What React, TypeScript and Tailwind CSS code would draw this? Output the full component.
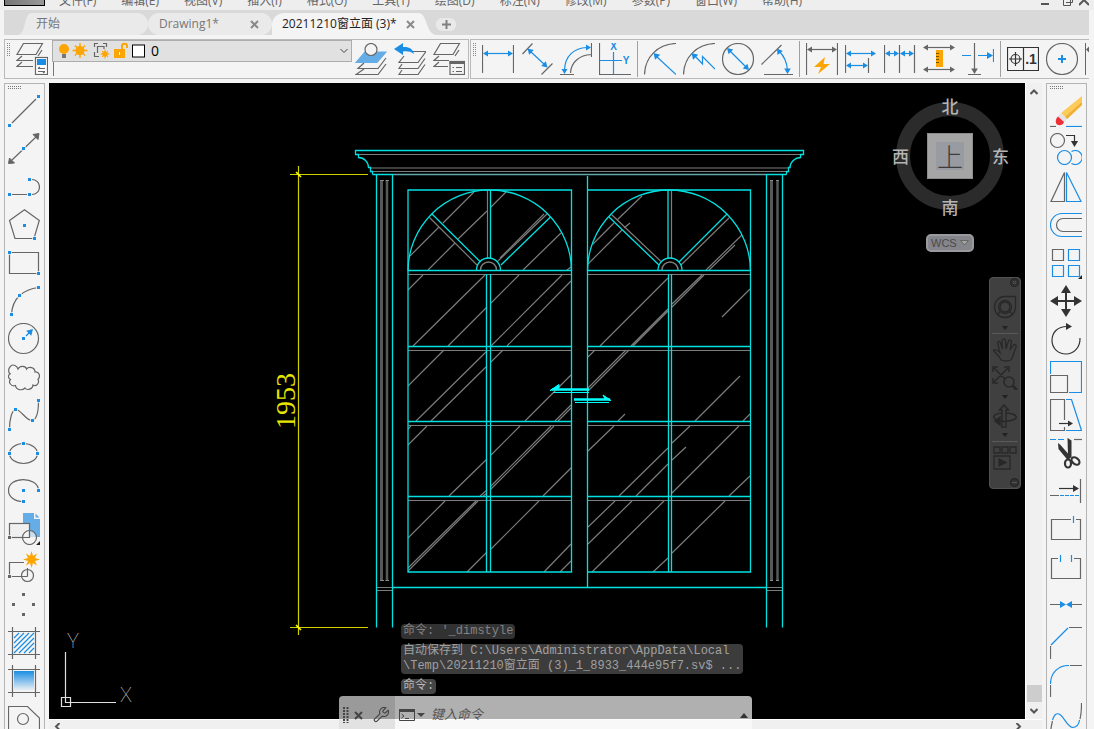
import type { ReactNode } from "react"

const GRAY = "#666666"
const BLUE = "#1a8de4"
const ORANGE = "#fca503"
const DARK = "#333333"

type Tool = { label: string; art: ReactNode }

function Art({ children }: { children: ReactNode }) {
  return (
    <svg width="32" height="32" viewBox="0 0 32 32" fill="none" stroke={GRAY} strokeWidth="1.2" className="shrink-0">
      {children}
    </svg>
  )
}

function Dot({ x, y, c = BLUE }: { x: number; y: number; c?: string }) {
  return <rect x={x - 1.5} y={y - 1.5} width="3" height="3" fill={c} stroke="#f4f4f4" strokeWidth="1.5" paintOrder="stroke" />
}

// arrowhead with its tip at x,y; a = rotation in degrees, 0 points right
function Head({ x, y, a = 0, c = BLUE, s = 1 }: { x: number; y: number; a?: number; c?: string; s?: number }) {
  return <path d="M0 0L-5 -3V3Z" fill={c} stroke="none" transform={`translate(${x} ${y}) rotate(${a}) scale(${s})`} />
}

function HArrow({ x1, x2, y, c = BLUE }: { x1: number; x2: number; y: number; c?: string }) {
  return (
    <>
      <path d={`M${x1 + 2} ${y}H${x2 - 2}`} stroke={c} />
      <Head x={x1} y={y} a={180} c={c} />
      <Head x={x2} y={y} c={c} />
    </>
  )
}

const drawTools: Tool[] = [
  { label: "直线", art: <><path d="M4 28L28 4" /><Dot x={1.5} y={30.5} /><Dot x={30.5} y={1.5} /></> },
  {
    label: "构造线",
    art: <><path d="M4 27L28 4" /><path d="M0.500 30.500L1.500 25L6.500 30ZM31 0.500L25 1.500L30 6.500Z" fill={GRAY} stroke={GRAY} strokeWidth="1" /><Dot x={15.5} y={15.5} /></>,
  },
  {
    label: "多段线",
    art: <><path d="M4 23.5H19M24 8.5A7.5 7.5 0 0 1 24 23.5" /><Dot x={1.5} y={23.5} /><Dot x={21.5} y={23.5} /><Dot x={21.5} y={8.5} /></>,
  },
  { label: "多边形", art: <><path d="M16.5 0.8L31.3 11.5L26 29.5H7L1.5 11.5Z" /><Dot x={16.5} y={16.5} /><Dot x={26.5} y={29.5} /></> },
  { label: "矩形", art: <><path d="M1.5 5.5H30.5V26.5H1.5Z" /><Dot x={1.5} y={5.5} /><Dot x={30.5} y={26.5} /></> },
  { label: "圆弧", art: <><path d="M3.5 29.5Q4 18 11.5 10.5Q19 4 30.5 2.5" /><Dot x={3.5} y={29.5} /><Dot x={11.5} y={10.5} /><Dot x={30.5} y={2.5} /></> },
  { label: "圆", art: <><circle cx="15.5" cy="15.5" r="15" /><path d="M18 13L22 9" stroke={BLUE} /><Head x={25} y={6} a={-45} s={1.2} /><Dot x={15.5} y={15.5} /></> },
  {
    label: "修订云线",
    art: <path d="M1.5 12.5C-1 8 3 2.500 7 4.500C9 5.500 9.500 6.500 10 8C12 4 18 5 18.500 8C21 5 27 6.500 27 11C31 10.500 33 15 30 18.500C32 22 28 26 25 24C25 28 19 30 17 27C14 30 8 29 7.500 24.500C3 26 0 21 2.500 18.500C-0.500 17 0 13 3 12.500" />,
  },
  {
    label: "样条曲线",
    art: <><path d="M1.5 30C1.500 20 4 10.500 8 10.500C13 10.500 18 22 24.500 21.500C29 20 30.500 12 30.500 2" /><Dot x={1.5} y={30.5} /><Dot x={7.5} y={10.5} /><Dot x={24.5} y={21.5} /><Dot x={30.5} y={1.5} /></>,
  },
  { label: "椭圆", art: <><ellipse cx="15.5" cy="16.5" rx="14" ry="10" /><Dot x={15.5} y={6.5} /><Dot x={1.5} y={16.5} /><Dot x={29.5} y={16.5} /></> },
  { label: "椭圆弧", art: <><path d="M30.500 15.500C30 1 0.500 1 0.500 15.500C0.500 22 7 26.500 15.500 26.500" /><Dot x={15.5} y={15.5} /><Dot x={30.5} y={15.5} /><Dot x={15.5} y={26.5} /></> },
  {
    label: "插入块",
    art: (
      <>
        <path d="M15 0H26V6H32V24H15Z" fill="#64ade6" stroke="none" />
        <path d="M27.5 0.500V4.500H31.500Z" fill="#64ade6" stroke="none" />
        <rect x="1.500" y="10.500" width="20" height="14" fill="#f0f0f0" />
        <circle cx="21.500" cy="24.500" r="7" fill="#f4f4f4" fillOpacity="0.7" />
        <path d="M21.500 17V24.500H14" />
        <Dot x={1.5} y={24.5} c={GRAY} />
        <path d="M32 28V32H28Z" fill="#222" stroke="none" />
      </>
    ),
  },
  {
    label: "创建块",
    art: (
      <>
        <path d="M19.500 25.500H1.500V11.500H16M19.500 17V25.500" />
        <circle cx="19.500" cy="24.500" r="6" />
        <path d="M23.500 0L25 5L29 2.500L27 7L32 8.500L27 10L29 14.500L25 12L23.500 17L22 12L18 14.500L20 10L15 8.500L20 7L18 2.500L22 5Z" fill={ORANGE} stroke="none" />
        <Dot x={1.5} y={25.5} c={GRAY} />
      </>
    ),
  },
  { label: "点", art: <><Dot x={15.5} y={5.5} c={GRAY} /><Dot x={5.5} y={15.5} c={GRAY} /><Dot x={25.5} y={15.5} c={GRAY} /><Dot x={15.5} y={25.5} c={GRAY} /></> },
  {
    label: "图案填充",
    art: (
      <>
        <path d="M4.500 0V32M27.500 0V32M0 4.500H32M0 27.500H32" />
        <path d="M6 11L11 6M6 16L16 6M6 21L21 6M6 26L26 6M11 26L26 11M16 26L26 16M21 26L26 21" stroke={BLUE} />
      </>
    ),
  },
  {
    label: "渐变色",
    art: (
      <>
        <defs>
          <linearGradient id="fade" x1="0" y1="0" x2="0" y2="1">
            <stop offset="0" stopColor="#1a8de4" />
            <stop offset="1" stopColor="#f4f4f4" />
          </linearGradient>
        </defs>
        <rect x="6" y="6" width="20" height="20" fill="url(#fade)" stroke="none" />
        <path d="M4.500 0V32M27.500 0V32M0 4.500H32M0 27.500H32" />
      </>
    ),
  },
  { label: "面域", art: <><path d="M0.500 32V3.500H19.500L31.500 15V32" /><circle cx="15" cy="16" r="5.500" /></> },
]

const modifyTools: Tool[] = [
  {
    label: "删除",
    art: (
      <>
        <path d="M0 31.500H6" />
        <path d="M16 31.500H32" stroke={BLUE} />
        <path d="M32 1V10L17 24L11 18Z" fill="#fccb5c" stroke="none" />
        <path d="M32 7V10L17 24L15 22Z" fill="#eeb035" stroke="none" />
        <path d="M11 18L17 24L14 27L8 21.500Z" fill="#e4e4e4" stroke="none" />
        <path d="M8 21.500L14 27C13 30.500 9 31 7 29.500C5 27.500 5.500 24 8 21.500Z" fill="#ee2f35" stroke="none" />
      </>
    ),
  },
  {
    label: "复制",
    art: (
      <>
        <circle cx="7.500" cy="7.500" r="7" />
        <path d="M16 2.500H24.500V9" stroke={DARK} />
        <Head x={24.5} y={14} a={90} c={DARK} s={1.2} />
        <circle cx="14.500" cy="24.500" r="7" stroke={BLUE} />
        <path d="M21.500 18.500A7 7 0 1 1 21.500 30.500" stroke={BLUE} />
      </>
    ),
  },
  { label: "镜像", art: <><path d="M14.500 1.500V30.500H1Z" /><path d="M16.500 1.500V30.500H31Z" stroke={BLUE} /></> },
  { label: "偏移", art: <><path d="M32 4.500H12A11.500 11.500 0 0 0 12 27.500H32" stroke={BLUE} /><path d="M32 9.500H13A6.500 6.500 0 0 0 13 22.500H32" /></> },
  {
    label: "阵列",
    art: (
      <>
        <path d="M2.500 2.500H13.500V13.500H2.500Z" />
        <path d="M18.500 2.500H29.500V13.500H18.500ZM2.500 18.500H13.500V29.500H2.500ZM18.500 18.500H29.500V29.500H18.500Z" stroke={BLUE} />
        <path d="M32 28V32H28Z" fill="#222" stroke="none" />
      </>
    ),
  },
  {
    label: "移动",
    art: (
      <>
        <path d="M16 4V28M4 16H28" stroke={DARK} strokeWidth="2" />
        <path d="M16 0L21 8H11ZM16 32L21 24H11ZM0 16L8 11V21ZM32 16L24 11V21Z" fill={DARK} stroke="none" />
      </>
    ),
  },
  { label: "旋转", art: <><path d="M30 15C30.500 24 24 31 16 31C8 31 2 25 2 17.500C2 9 8 3.500 17 3.500" stroke={DARK} /><Head x={22} y={3.5} c={DARK} s={1.2} /></> },
  { label: "缩放", art: <><path d="M0.500 13V0.500H31.500V31.500H19" stroke={BLUE} /><path d="M0.500 14.500H17.500V31.500H0.500Z" /></> },
  {
    label: "拉伸",
    art: (
      <>
        <path d="M14.500 21V0.500H0.500V31.500H14.500V28" />
        <path d="M16 0.500H21.500L31.500 31.500H16" stroke={BLUE} />
        <path d="M9 24.500H18" stroke={DARK} />
        <Head x={23} y={24.5} c={DARK} />
      </>
    ),
  },
  {
    label: "修剪",
    art: (
      <>
        <path d="M0 2.500H16" stroke={BLUE} strokeDasharray="6 2" />
        <path d="M24 2.500H32" />
        <path d="M8 6L10.500 8L21 20L18 23.500L8.500 12Z" fill={DARK} stroke="none" />
        <path d="M17.500 1L21.500 3.500V21L18 19.500Z" fill={DARK} stroke="none" />
        <ellipse cx="18" cy="26.500" rx="3" ry="4" stroke={DARK} strokeWidth="2.200" />
        <ellipse cx="25.500" cy="24" rx="3" ry="4.500" stroke={DARK} strokeWidth="2.200" transform="rotate(-50 25.500 24)" />
      </>
    ),
  },
  {
    label: "延伸",
    art: (
      <>
        <path d="M30.500 4V28M0 20.500H9" />
        <path d="M10 20.500H29" stroke={BLUE} strokeDasharray="4 1" />
        <path d="M9 13.500H25" stroke={DARK} />
        <Head x={29} y={13.5} c={DARK} s={1.2} />
      </>
    ),
  },
  { label: "打断于点", art: <><path d="M21 6.500H1.500V26.500H30.500V6.500H26" /><path d="M23.500 3V10" stroke={BLUE} /></> },
  { label: "打断", art: <><path d="M8 7.500H1.500V27.500H30.500V7.500H24" /><path d="M10.500 4V11M21.500 4V11" stroke={BLUE} /></> },
  { label: "合并", art: <><path d="M0 15.500H10M22 15.500H32" /><path d="M10 12L16 15.500L10 19ZM22 12L16 15.500L22 19Z" fill={BLUE} stroke="none" /></> },
  { label: "倒角", art: <><path d="M19 0.500H32M0.500 19V32" /><path d="M1 18L18 1" stroke={BLUE} /></> },
  { label: "圆角", art: <><path d="M20 0.500H32M0.500 20V32" /><path d="M0.500 19C0.500 8 8 0.500 19 0.500" stroke={BLUE} /></> },
  {
    label: "光顺曲线",
    art: <><path d="M31.500 0C31.500 8 31 12 30 16M2.500 18C1.500 22 0.500 26 0.500 32" /><path d="M2.500 17C4 12 6 10 9 11C14 13 17 24 23 24.500C27 24 29 21 29.500 17" stroke={BLUE} /></>,
  },
]

const dimGroups: Tool[][] = [
  [
    { label: "线性", art: <><path d="M0.500 2V30M31.500 2V30" /><HArrow x1={1} x2={31} y={10.5} /></> },
    {
      label: "对齐",
      art: <><path d="M11.500 0.500L1.500 11M31.500 20.500L20.500 31.500" /><path d="M9 8L24 22" stroke={BLUE} /><Head x={6.5} y={5.5} a={224} s={1.1} /><Head x={26.5} y={24.5} a={44} s={1.1} /></>,
    },
    {
      label: "弧长",
      art: (
        <>
          <path d="M31 11.500C20 12 11 19 10.500 30M31.500 0V14M0 31.500H14" />
          <path d="M27 4.500C14 5 5 13 4.500 27" stroke={BLUE} />
          <Head x={31} y={4.5} />
          <Head x={4.5} y={31} a={90} />
        </>
      ),
    },
    {
      label: "坐标",
      art: (
        <>
          <path d="M0.500 0V31.500H32" />
          <path d="M14.500 9V31M1 17.500H23" stroke={BLUE} />
          <text x="14.500" y="7" textAnchor="middle" fill={BLUE} stroke="none" className="font-['Liberation_Sans'] text-[10px] font-bold">X</text>
          <text x="27" y="21" textAnchor="middle" fill={BLUE} stroke="none" className="font-['Liberation_Sans'] text-[10px] font-bold">Y</text>
        </>
      ),
    },
  ],
  [
    { label: "半径", art: <><path d="M32 0.500C14 1 1 14 0.500 31.500" /><path d="M12 13L32 31.500" stroke={BLUE} /><Head x={9.5} y={10} a={226} s={1.2} /></> },
    { label: "折弯", art: <><path d="M32 0.500C14 1 1 14 0.500 31.500" /><path d="M11 12L19.500 21V13.500L32 26" stroke={BLUE} /><Head x={8.5} y={10} a={226} s={1.2} /></> },
    { label: "直径", art: <><circle cx="16" cy="16" r="15.500" /><path d="M8 8L24 24" stroke={BLUE} /><Head x={5} y={5} a={225} s={1.1} /><Head x={27} y={27} a={45} s={1.1} /></> },
    { label: "角度", art: <><path d="M20.500 2L0.500 21.500M3 31.500H32" /><path d="M18 8C24 14 26 20 26.500 27" stroke={BLUE} /><Head x={16} y={5.5} a={235} s={1.1} /><Head x={26.5} y={31} a={90} s={1.1} /></> },
  ],
  [
    { label: "快速标注", art: <><path d="M0.500 0V32M31.500 0V32" /><HArrow x1={1} x2={31} y={6.5} c={GRAY} /><path d="M19 14L8 24H15L12 31L24 21H17.500Z" fill={ORANGE} stroke="none" /></> },
    { label: "基线", art: <><path d="M0.500 2V30M23.500 15V30" /><HArrow x1={1} x2={31} y={10.5} /><HArrow x1={1} x2={23} y={22.5} /></> },
    { label: "连续", art: <><path d="M0.500 2V30M15.500 2V30M30.500 2V30" /><HArrow x1={1} x2={15} y={10.5} /><HArrow x1={16} x2={30} y={10.5} /></> },
    {
      label: "等距标注",
      art: <><HArrow x1={0} x2={32} y={4.5} c={GRAY} /><HArrow x1={0} x2={32} y={26.5} c={GRAY} /><rect x="13" y="7" width="7" height="17" fill={ORANGE} stroke="none" /><path d="M13 10.500H16M13 13.500H16M13 16.500H16M13 19.500H16" stroke="#7a5200" strokeWidth="1" /></>,
    },
    {
      label: "折断标注",
      art: <><path d="M12.500 0V27M6 31.500H19" /><Head x={12.5} y={31} a={90} c={GRAY} s={1.1} /><path d="M0 12.500H9M16 12.500H26M31.500 6V19" stroke={BLUE} /><Head x={31} y={12.5} s={1.2} /></>,
    },
  ],
  [
    {
      label: "公差",
      art: (
        <>
          <path d="M0.500 4.500H31.500V27.500H0.500ZM16.500 4.500V27.500" stroke={DARK} />
          <circle cx="8.500" cy="16" r="4.500" stroke={DARK} />
          <path d="M2 16H15M8.500 9V23" stroke={DARK} />
          <text x="24" y="21" textAnchor="middle" fill={DARK} stroke="none" className="font-['Liberation_Sans'] text-[14px] font-bold">.1</text>
        </>
      ),
    },
    { label: "圆心标记", art: <><circle cx="16" cy="16" r="15.500" /><path d="M12 16H20M16 12V20" stroke={BLUE} strokeWidth="2" /></> },
  ],
]

const layerTools: Tool[] = [
  {
    label: "将对象的图层置为当前",
    art: (
      <>
        <path d="M9 20L3 25.500H23L31 15M9 26L1 31.500H23L31 21" />
        <path d="M10 9H31L22 19.500H1Z" fill="#64ade6" stroke="#64ade6" />
        <circle cx="16" cy="6.500" r="6" fill="#f4f4f4" />
      </>
    ),
  },
  {
    label: "上一个图层",
    art: (
      <>
        <path d="M18 8.500H32L24 19.500H5L10 13M8 21L5 25.500H24L31 15.500M8 27L5 31.500H24L31 21.500" />
        <path d="M0 6L9 0V4C15 3.500 19 6 20 11C17 8.500 13 8 9 8.500V12Z" fill={BLUE} stroke="none" />
      </>
    ),
  },
  {
    label: "图层状态管理器",
    art: (
      <>
        <path d="M7.500 0.500H26.500L20 11.500H1ZM6 13L1 17.500H16M22 13L26 7M6 19L1 23.500H15" />
        <rect x="17" y="18.500" width="14.500" height="13" fill="#f4f4f4" />
        <path d="M16.500 19.500H32" strokeWidth="3" />
        <path d="M19.500 24.500H21M23 24.500H29M19.500 28.500H21M23 28.500H29" />
      </>
    ),
  },
]

const menus = ["文件(F)", "编辑(E)", "视图(V)", "插入(I)", "格式(O)", "工具(T)", "绘图(D)", "标注(N)", "修改(M)", "参数(P)", "窗口(W)", "帮助(H)"]

function ToolButton({ tool }: { tool: Tool }) {
  return (
    <button type="button" aria-label={tool.label} className="flex shrink-0 items-center">
      <Art>{tool.art}</Art>
    </button>
  )
}

function Grip({ vertical = false }: { vertical?: boolean }) {
  return vertical ? (
    <svg width="4" height="14" className="shrink-0" stroke="#888" strokeDasharray="1 1">
      <path d="M0.500 0V14M2.500 0V14" />
    </svg>
  ) : (
    <svg width="14" height="8" className="shrink-0" stroke="#777" strokeDasharray="1 1">
      <path d="M0 2.500H14M0 4.500H14" />
    </svg>
  )
}

function SideBar({ tools }: { tools: Tool[] }) {
  return (
    <div className="flex w-[41px] shrink-0 flex-col overflow-hidden border border-b-0 border-[#b4b4b4] bg-[#f4f4f4] pl-[3px]">
      <div className="h-2 shrink-0"><Grip /></div>
      {tools.map((tool) => (
        <div key={tool.label} className="flex h-[38px] shrink-0 items-center">
          <ToolButton tool={tool} />
        </div>
      ))}
    </div>
  )
}

function MenuBar() {
  return (
    <div className="flex h-[10px] shrink-0 items-end overflow-hidden bg-[#eeeeee] text-xs leading-4 text-[#666]">
      <div className="mb-1 ml-1 h-4 w-[41px] shrink-0 border border-black bg-gradient-to-r from-[#777] to-[#999]" />
      <nav className="mb-px ml-[14px] flex flex-1 gap-[25px]">
        {menus.map((m) => (
          <button key={m} type="button" className="whitespace-nowrap">{m}</button>
        ))}
      </nav>
      <div className="mb-[2px] flex shrink-0 items-end gap-[6px] pr-[5px] text-[#555]">
        <button type="button" aria-label="最小化" className="mr-[7px]"><svg width="9" height="8" stroke="currentColor" strokeWidth="2"><path d="M0 4H8" /></svg></button>
        <button type="button" aria-label="还原"><svg width="10" height="8" fill="none" stroke="currentColor"><path d="M0.500 0V5.500H7.500V0M3 2.500H9.500V0" /></svg></button>
        <button type="button" aria-label="关闭"><svg width="10" height="8" stroke="currentColor" strokeWidth="2"><path d="M0 5L9 -4M1 -4L10 5" /></svg></button>
      </div>
    </div>
  )
}

function CloseMark() {
  return (
    <svg width="9" height="9" stroke="#8a8a8a" strokeWidth="2"><path d="M1 1L8 8M8 1L1 8" /></svg>
  )
}

function FileTabs() {
  return (
    <div className="ml-1 mr-[5px] flex h-[25px] shrink-0 items-end bg-[#d9d9d9] pl-[14px] text-xs text-[#777]">
      <svg width="14" height="22" fill="#eaeaea" className="shrink-0"><path d="M0 22C9 20 5 0 14 0V22Z" /></svg>
      <button type="button" className="h-[22px] w-[116px] rounded-r-xl bg-[#eaeaea] pl-1 text-left">开始</button>
      <div className="flex h-[22px] w-[124px] items-center justify-between rounded-xl bg-[#eaeaea] pl-[11px] pr-[13px]">
        <button type="button">Drawing1*</button>
        <button type="button" aria-label="关闭 Drawing1"><CloseMark /></button>
      </div>
      <div className="flex h-[22px] w-[146px] items-center justify-between rounded-tl-xl bg-[#f4f4f4] pl-[10px] pr-[3px] text-[#222]">
        <button type="button" className="whitespace-nowrap">20211210窗立面 (3)*</button>
        <button type="button" aria-label="关闭当前图形"><CloseMark /></button>
      </div>
      <svg width="18" height="22" fill="#f4f4f4" className="shrink-0"><path d="M0 0C10 0 7 20 18 22H0Z" /></svg>
      <button type="button" aria-label="新图形" className="mb-1 flex h-[13px] w-5 items-center justify-center rounded-md bg-[#e9e9e9]">
        <svg width="9" height="9" stroke="#808080" strokeWidth="2"><path d="M0 4.500H9M4.500 0V9" /></svg>
      </button>
    </div>
  )
}

function LayerPanel() {
  return (
    <div className="flex w-[465px] shrink-0 border border-[#b9b9b9] pl-[2px]">
      <div className="pt-[3px]"><Grip vertical /></div>
      <div className="ml-[5px] flex items-center">
        <ToolButton
          tool={{
            label: "图层特性",
            art: (
              <>
                <path d="M7.500 0.500H26.500L20 11.500H1ZM6 13L1 17.500H17M22 13L26 7M6 19L1 23.500H17" />
                <rect x="19.500" y="14.500" width="12" height="17" fill="#fff" />
                <rect x="21" y="16" width="9" height="6" fill={BLUE} stroke="none" />
                <path d="M22 25.500H29M22 28.500H29M24 24L22 25.500M27 30L29 28.500" />
              </>
            ),
          }}
        />
      </div>
      <div className="ml-1 w-[300px] shrink-0">
        <div className="relative flex h-[22px] items-center border border-[#adadad] bg-[#e1e1e1] pl-[6px]">
          <svg width="92" height="18" viewBox="0 0 92 18" fill="none" className="shrink-0">
            <circle cx="5" cy="7" r="5" fill={ORANGE} />
            <path d="M3 12H7V16H3Z" fill="#777" />
            <circle cx="21" cy="8.500" r="4.500" fill={ORANGE} />
            <path d="M21 1V16M13.500 8.500H28.500M16 3.500L26 13.500M26 3.500L16 13.500" stroke={ORANGE} strokeWidth="1.500" />
            <path d="M35.500 5V1.500H39M44 1.500H47.500V5M35.500 10V14.500H40M38.500 11V4.500H45V7" stroke={GRAY} strokeWidth="1.200" />
            <circle cx="46" cy="12" r="2.800" fill={ORANGE} />
            <path d="M46 7.500V16.500M41.500 12H50.500M43 9L49 15M49 9L43 15" stroke={ORANGE} />
            <rect x="55" y="7" width="11" height="9" fill={ORANGE} />
            <path d="M63 7V4C63 1 68 1 68 4V6" stroke={ORANGE} strokeWidth="2" />
            <path d="M60.500 10V13" stroke="#fff" />
            <rect x="73.500" y="3" width="12" height="12" fill="#fff" stroke="#000" />
          </svg>
          <select aria-label="图层" className="h-5 flex-1 appearance-none bg-transparent text-sm text-black">
            <option>0</option>
          </select>
          <svg width="8" height="6" className="pointer-events-none absolute right-[3px]" fill="none" stroke="#444"><path d="M0.500 1L4 4.500L7.500 1" /></svg>
        </div>
        <div className="ml-px h-[14px] w-px bg-[#777]" />
      </div>
      <div className="ml-[3px] flex items-center gap-[7px]">
        {layerTools.map((t) => <ToolButton key={t.label} tool={t} />)}
      </div>
    </div>
  )
}

function DimPanel() {
  return (
    <div className="flex min-w-0 flex-1 overflow-hidden border border-r-0 border-[#b9b9b9] pl-[2px]">
      <div className="shrink-0 pt-[3px]"><Grip vertical /></div>
      <div className="-ml-[2px] flex items-center">
        {dimGroups.map((group, i) => (
          <div key={i} className="flex h-9 items-center gap-[7px] border-l border-[#a0a0a0] px-[6px] first:border-transparent">
            {group.map((t) => <ToolButton key={t.label} tool={t} />)}
          </div>
        ))}
        <svg width="5" height="32" className="shrink-0" stroke={GRAY} fill="none"><path d="M1.500 0V32" /><path d="M5 3.500L2 6.500L5 9.500Z" fill={GRAY} stroke="none" /></svg>
      </div>
    </div>
  )
}

// glass reflections: x1, y1, x2, y2
const glare = [
  [474, 192, 443, 223], [439, 227, 410, 256], [487, 211, 458, 239], [455, 243, 428, 270], [506, 192, 491, 207], [544, 214, 500, 258],
  [561, 233, 523, 270], [571, 267, 567, 270], [423, 275, 408, 290], [485, 275, 413, 346], [487, 307, 448, 346], [519, 275, 491, 303],
  [562, 275, 491, 346], [571, 281, 507, 346], [444, 350, 408, 386], [487, 351, 416, 421], [487, 366, 431, 421], [503, 350, 491, 362],
  [571, 375, 525, 421], [571, 405, 555, 421], [571, 408, 558, 421], [411, 426, 408, 429], [427, 426, 408, 445], [487, 459, 449, 496],
  [520, 426, 491, 455], [551, 426, 491, 486], [554, 426, 491, 489], [487, 490, 480, 496], [487, 493, 483, 496], [571, 468, 543, 496],
  [445, 501, 408, 538], [476, 501, 408, 568], [478, 501, 408, 571], [487, 552, 467, 572], [539, 501, 491, 549], [571, 544, 544, 572],
  [571, 561, 560, 572],
  [642, 196, 617, 220], [614, 223, 593, 244], [630, 223, 624, 228], [622, 230, 588, 264], [742, 235, 706, 270], [735, 245, 709, 270],
  [668, 278, 600, 346], [702, 275, 672, 304], [704, 275, 672, 307], [668, 309, 631, 346], [668, 311, 633, 346], [750, 289, 722, 317],
  [595, 350, 588, 357], [626, 350, 588, 388], [629, 350, 588, 391], [740, 376, 695, 421], [625, 414, 618, 421], [750, 414, 743, 421],
  [614, 426, 588, 451], [668, 448, 619, 496], [668, 464, 636, 496], [690, 426, 672, 443], [686, 447, 672, 460], [739, 426, 672, 493],
  [750, 476, 729, 496], [615, 501, 588, 527], [632, 501, 588, 544], [664, 501, 592, 572], [668, 558, 653, 572], [725, 501, 672, 553],
]

const rails = [270.5, 346.5, 421.5, 496.5]

function Drawing() {
  return (
    <svg viewBox="49 83 976 636" fill="none" className="h-full w-full">
      <g stroke="#7c7c7c" strokeWidth="1.200">
        <path d={glare.map(([a, b, c, d]) => `M${a} ${b}L${c} ${d}`).join("")} />
        <path d="M358 154.500H800M370 168H789M372 171.500H787" strokeWidth="1" />
        <path d="M477 265L429.500 217.500M497 262L547 214M661.500 262L611.500 214.500M681 265L729 218M487.500 190V259M671.500 190V259" />
        <path d="M480.500 270A8 8 0 0 1 496.500 270M662 270A8 8 0 0 1 678 270" strokeWidth="1.500" />
        <path d="M377 587.500H392M377 590.500H392M767 587.500H782M767 590.500H782" />
        {rails.map((y) => <path key={y} d={`M408 ${y + 4}H571M588 ${y + 4}H750`} strokeWidth="1" />)}
      </g>
      <g stroke="#585858">
        <path d="M381.500 181V581M771.500 181V581" strokeWidth="3" />
        <path d="M387 181V581M777.500 181V581" strokeWidth="2.500" />
        <path d="M380 180.500H384M385.500 180.500H389M770 180.500H773M776 180.500H779M380 580.500H384M385.500 580.500H389M770 580.500H773M776 580.500H779" stroke="#8a8a8a" />
      </g>
      <g stroke="#00e2e2" strokeWidth="1.300">
        <path d="M372.500 174.500V171.500H370.500V167.500H368.500C368.500 162 364 157.500 358.500 157.500V154.500H355.500V150.500H803.500V154.500H800.500V157.500C795 157.500 790 162 790 167.500H788.500V171.500H786.500V174.500" />
        <path d="M372.500 174.500H393M766 174.500H786.500" />
        <path d="M393 174.500H766" stroke="#5fa9ad" />
        <path d="M376.500 174.500V627.500M392.500 174.500V627.500M766.500 174.500V627.500M782.500 174.500V627.500M587.500 176V587.500M392.500 587.500H766.500" />
        <path d="M408 190H571.500V572H408ZM587.500 190H750.500V572H587.500" />
        <path d="M408 271A81.700 81 0 0 1 571.500 271M587.500 271A81.500 81 0 0 1 750.500 271" />
        <path d="M490.500 190V259M668 190V259M486.500 274V572M490.500 274V572M668.500 274V572M671.500 274V572" />
        <path d="M432 214L480.500 262M550.500 217L501 265M609 217L659 265M727 214L679 262" />
        <path d="M476.500 270A12 12 0 0 1 500.500 270M658 270A12 12 0 0 1 682 270" />
        {rails.map((y) => <path key={y} d={`M408 ${y}H571M588 ${y}H750`} />)}
      </g>
      <g stroke="#00ffff" strokeWidth="2.500">
        <path d="M552 389.500H589M574 399.500H610" />
        <path d="M553 392.500H589M575 402.500H609" strokeWidth="1" />
        <path d="M550 390.500L559 384.500V388ZM611 400.500L603 395L605 399Z" fill="#00ffff" strokeWidth="1" />
      </g>
      <g stroke="#d2d200">
        <path d="M298.500 166V635M290 174.500H368M290 627.500H368" strokeWidth="1.200" />
        <path d="M296 172L301 177M296 625L301 630" stroke="#ffff00" strokeWidth="1.500" />
      </g>
      <text x="295" y="401" textAnchor="middle" transform="rotate(-90 295 401)" fill="#e6e600" className="font-['Liberation_Serif'] text-[28px]">1953</text>
      <path d="M65.500 652V702.500H116M61.500 697.500H70.500V706.500H61.500Z" stroke="#e0e0e0" strokeWidth="1.200" />
      <text x="73" y="648" textAnchor="middle" fill="#d0d0d0" className="font-['Roboto'] text-[20px] font-thin">Y</text>
      <text x="126" y="702" textAnchor="middle" fill="#d0d0d0" className="font-['Roboto'] text-[20px] font-thin">X</text>
    </svg>
  )
}

function ViewCube() {
  return (
    <div className="absolute right-[15px] top-3 flex w-[120px] flex-col items-center text-[#b4b4b4]">
      <div className="relative flex h-[121px] w-full items-center justify-center font-['Noto_Sans_CJK_SC',sans-serif] text-[17px] font-medium leading-6">
        <svg width="108" height="108" viewBox="0 0 108 108" fill="none" stroke="#2b2b2b" strokeWidth="14"><circle cx="54" cy="54" r="47" /></svg>
        <button type="button" className="absolute flex h-[46px] w-[46px] items-center justify-center border border-[#8c8c8c] bg-[#a5a5a5]">
          <span className="h-7 w-7 bg-[#999ba2] text-center font-['Noto_Sans_CJK_SC',serif] text-[26px] font-light leading-7 text-[#3c3c3c]">上</span>
        </button>
        <span className="absolute top-[-1px]">北</span>
        <span className="absolute bottom-[-3px]">南</span>
        <span className="absolute left-[2px]">西</span>
        <span className="absolute right-px">东</span>
      </div>
      <button type="button" className="mt-[18px] flex h-[18px] w-12 items-center justify-between rounded-[5px] border-2 border-[#9a9a9e] bg-[#85858c] px-[3px] font-['Liberation_Sans'] text-[11px] text-[#4a4a4a]">
        WCS
        <svg width="9" height="6" fill="#a5a5a5" stroke="#666"><path d="M0.500 0.500H8.500L4.500 5Z" /></svg>
      </button>
    </div>
  )
}

function Caret() {
  return <svg width="6" height="4" fill="#222"><path d="M0 0H6L3 4Z" /></svg>
}

function NavBar() {
  return (
    <div className="absolute right-1 top-[194px] flex h-[212px] w-8 flex-col items-center rounded border border-[#525252] bg-[#404040] text-[#282828]">
      <svg width="9" height="9" className="mr-px self-end" fill="#333" stroke="#202020"><circle cx="4.500" cy="4.500" r="4" /><path d="M3 3L6 6M6 3L3 6" stroke="#555" /></svg>
      <button type="button" aria-label="导航控制盘" className="mt-2">
        <svg width="24" height="24" fill="none" stroke="currentColor" strokeWidth="1.300"><path d="M12 1.500H22.500V12A10.500 10.500 0 1 1 12 1.500Z" /><circle cx="12" cy="12" r="6.500" /><circle cx="12" cy="12" r="5" /><path d="M7 17L4 20M17 17L20 20" /></svg>
      </button>
      <div className="mt-[7px]"><Caret /></div>
      <div className="mt-[3px] h-px w-[26px] bg-[#5a5a5a]" />
      <button type="button" aria-label="平移" className="mt-1">
        <svg width="26" height="24" fill="none" stroke="currentColor" strokeWidth="1.300"><path d="M9 22C7 17 3 15 1.500 12.500C3 10.500 6 12.500 8 14.500L5.500 5C6 2.500 8 3 8.500 5L10.500 11L10 2.500C11 0 13 0.500 13.500 2.500L14 11L16.500 3C18 1 19.500 2 19.500 4L18 12L21.500 7C23 5.500 24.500 7 24 9C22 14 21 19 19 22Q14 24 9 22Z" /></svg>
      </button>
      <button type="button" aria-label="范围缩放" className="mt-1">
        <svg width="26" height="24" fill="none" stroke="currentColor" strokeWidth="1.500"><path d="M2 2L16 16M16 2L2 16M1 6V1H6M12 1H17V6M1 12V17H6" /><circle cx="17" cy="16" r="5" fill="#404040" /><path d="M21 20L25 24" strokeWidth="3" /></svg>
      </button>
      <div className="mt-[5px]"><Caret /></div>
      <button type="button" aria-label="动态观察" className="mt-[5px]">
        <svg width="26" height="24" fill="none" stroke="currentColor" strokeWidth="1.500"><path d="M10 23V6H7.500L12 1L16.500 6H14V23ZM10 9C3 9.500 1 12 2 14C3 15 4 16 6 16M14 9C22 9 25 12 24 14C22 17 12 18 7 17" /><path d="M3 17L8 13V21Z" fill="currentColor" /></svg>
      </button>
      <div className="mt-[5px]"><Caret /></div>
      <div className="mt-1 h-px w-[26px] bg-[#5a5a5a]" />
      <button type="button" aria-label="ShowMotion" className="mt-1">
        <svg width="25" height="24" fill="none" stroke="currentColor" strokeWidth="1.300"><path d="M1 1H7V7H1ZM9 1H15V7H9ZM17 1H23V7H17ZM1 10H17V23H1Z" /><path d="M6 13L13 16.500L6 20Z" fill="currentColor" /></svg>
      </button>
      <svg width="9" height="9" className="mb-px mr-px mt-auto self-end" fill="#333" stroke="#202020"><circle cx="4.500" cy="4.500" r="4" /><path d="M2 4.500H7" stroke="#555" /></svg>
    </div>
  )
}

function CommandLine() {
  return (
    <div className="absolute bottom-0 left-[290px] w-[413px]">
      <div className="ml-[62px] flex flex-col items-start gap-[5px] whitespace-pre font-['Liberation_Mono','Noto_Sans_CJK_SC',monospace] text-xs leading-[15px] text-[#a0a0a0]">
        <p className="rounded-sm bg-[#323232] px-[2px] text-[#828282]">命令: '_dimstyle</p>
        <p className="rounded-sm bg-[#3c3c3c] px-[2px]">
          自动保存到 C:\Users\Administrator\AppData\Local
          <br />
          \Temp\20211210窗立面 (3)_1_8933_444e95f7.sv$ ...
        </p>
        <p className="rounded-sm bg-[#464646] px-[2px] text-[#b8b8b8]">命令:</p>
      </div>
      <div className="mt-[2px] flex h-[33px] overflow-hidden rounded-t-sm text-[#444]">
        <div className="flex w-14 items-center gap-[5px] bg-[#dcdcdc]/70 pl-1 pt-[5px]">
          <svg width="6" height="16" stroke="#444" strokeWidth="2" strokeDasharray="2 1"><path d="M1 0V16M4.500 0V16" /></svg>
          <button type="button" aria-label="关闭命令行"><svg width="9" height="9" stroke="currentColor" strokeWidth="2"><path d="M1 1L8 8M8 1L1 8" /></svg></button>
          <button type="button" aria-label="自定义" className="ml-1">
            <svg width="18" height="18" viewBox="0 0 24 24" fill="none" stroke="currentColor" strokeWidth="1.500"><path d="M14.700 6.300a1 1 0 0 0 0 1.400l1.600 1.600a1 1 0 0 0 1.400 0l3.800-3.800a6 6 0 0 1-7.900 7.900l-6.900 6.900a2.100 2.100 0 0 1-3-3l6.900-6.900a6 6 0 0 1 7.900-7.900z" /></svg>
          </button>
        </div>
        <label className="flex flex-1 items-center bg-[#fbfbfb]/70 pl-1 pr-1 pt-[5px]">
          <svg width="27" height="12" fill="none" stroke="#444"><path d="M0.500 0.500H15.500V11.500H0.500Z" /><path d="M0 1.500H16" strokeWidth="3" /><path d="M2.500 5L5 7L2.500 9M6 9.500H10" /><path d="M18 4H26L22 8Z" fill="#444" stroke="none" /></svg>
          <input aria-label="命令" placeholder="键入命令" className="ml-[5px] min-w-0 flex-1 bg-transparent text-[13px] italic outline-none placeholder:text-[#555]" />
          <svg width="8" height="5" fill="#333"><path d="M0 5H8L4 0Z" /></svg>
        </label>
      </div>
    </div>
  )
}

export default function App() {
  return (
    <div className="flex h-screen flex-col overflow-hidden bg-[#f4f4f4] font-['Open_Sans','Noto_Sans_CJK_SC',sans-serif]">
      <MenuBar />
      <FileTabs />
      <div className="ml-1 mr-[5px] mt-1 flex h-10 shrink-0 gap-px">
        <LayerPanel />
        <DimPanel />
      </div>
      <div className="mt-1 flex min-h-0 flex-1 gap-1 pl-1 pr-[7px]">
        <SideBar tools={drawTools} />
        <main className="relative flex min-w-0 flex-1 flex-col">
          <div className="flex min-h-0 flex-1">
            <div className="relative min-w-0 flex-1 overflow-hidden bg-black">
              <Drawing />
              <ViewCube />
              <NavBar />
            </div>
            <div className="flex w-[17px] shrink-0 flex-col items-center border-l border-white bg-[#f0f0f0] pb-[5px] pt-[6px]">
              <button type="button" aria-label="向上滚动"><svg width="8" height="6" fill="none" stroke="#555" strokeWidth="2"><path d="M0.500 5L4 1.500L7.500 5" /></svg></button>
              <div className="mt-auto h-[17px] w-[15px] bg-[#cdcdcd]" />
              <button type="button" aria-label="向下滚动" className="mt-[6px]"><svg width="8" height="6" fill="none" stroke="#555" strokeWidth="2"><path d="M0.500 1L4 4.500L7.500 1" /></svg></button>
            </div>
          </div>
          <div className="flex h-[10px] shrink-0 items-end justify-between border-t border-white bg-[#f0f0f0] pl-[5px] pr-5">
            <button type="button" aria-label="向左滚动"><svg width="6" height="6" fill="none" stroke="#555" strokeWidth="2"><path d="M5.500 0L2 3.500L5.500 7" /></svg></button>
            <button type="button" aria-label="向右滚动"><svg width="6" height="6" fill="none" stroke="#555" strokeWidth="2"><path d="M0.500 0L4 3.500L0.500 7" /></svg></button>
          </div>
          <CommandLine />
        </main>
        <SideBar tools={modifyTools} />
      </div>
    </div>
  )
}
